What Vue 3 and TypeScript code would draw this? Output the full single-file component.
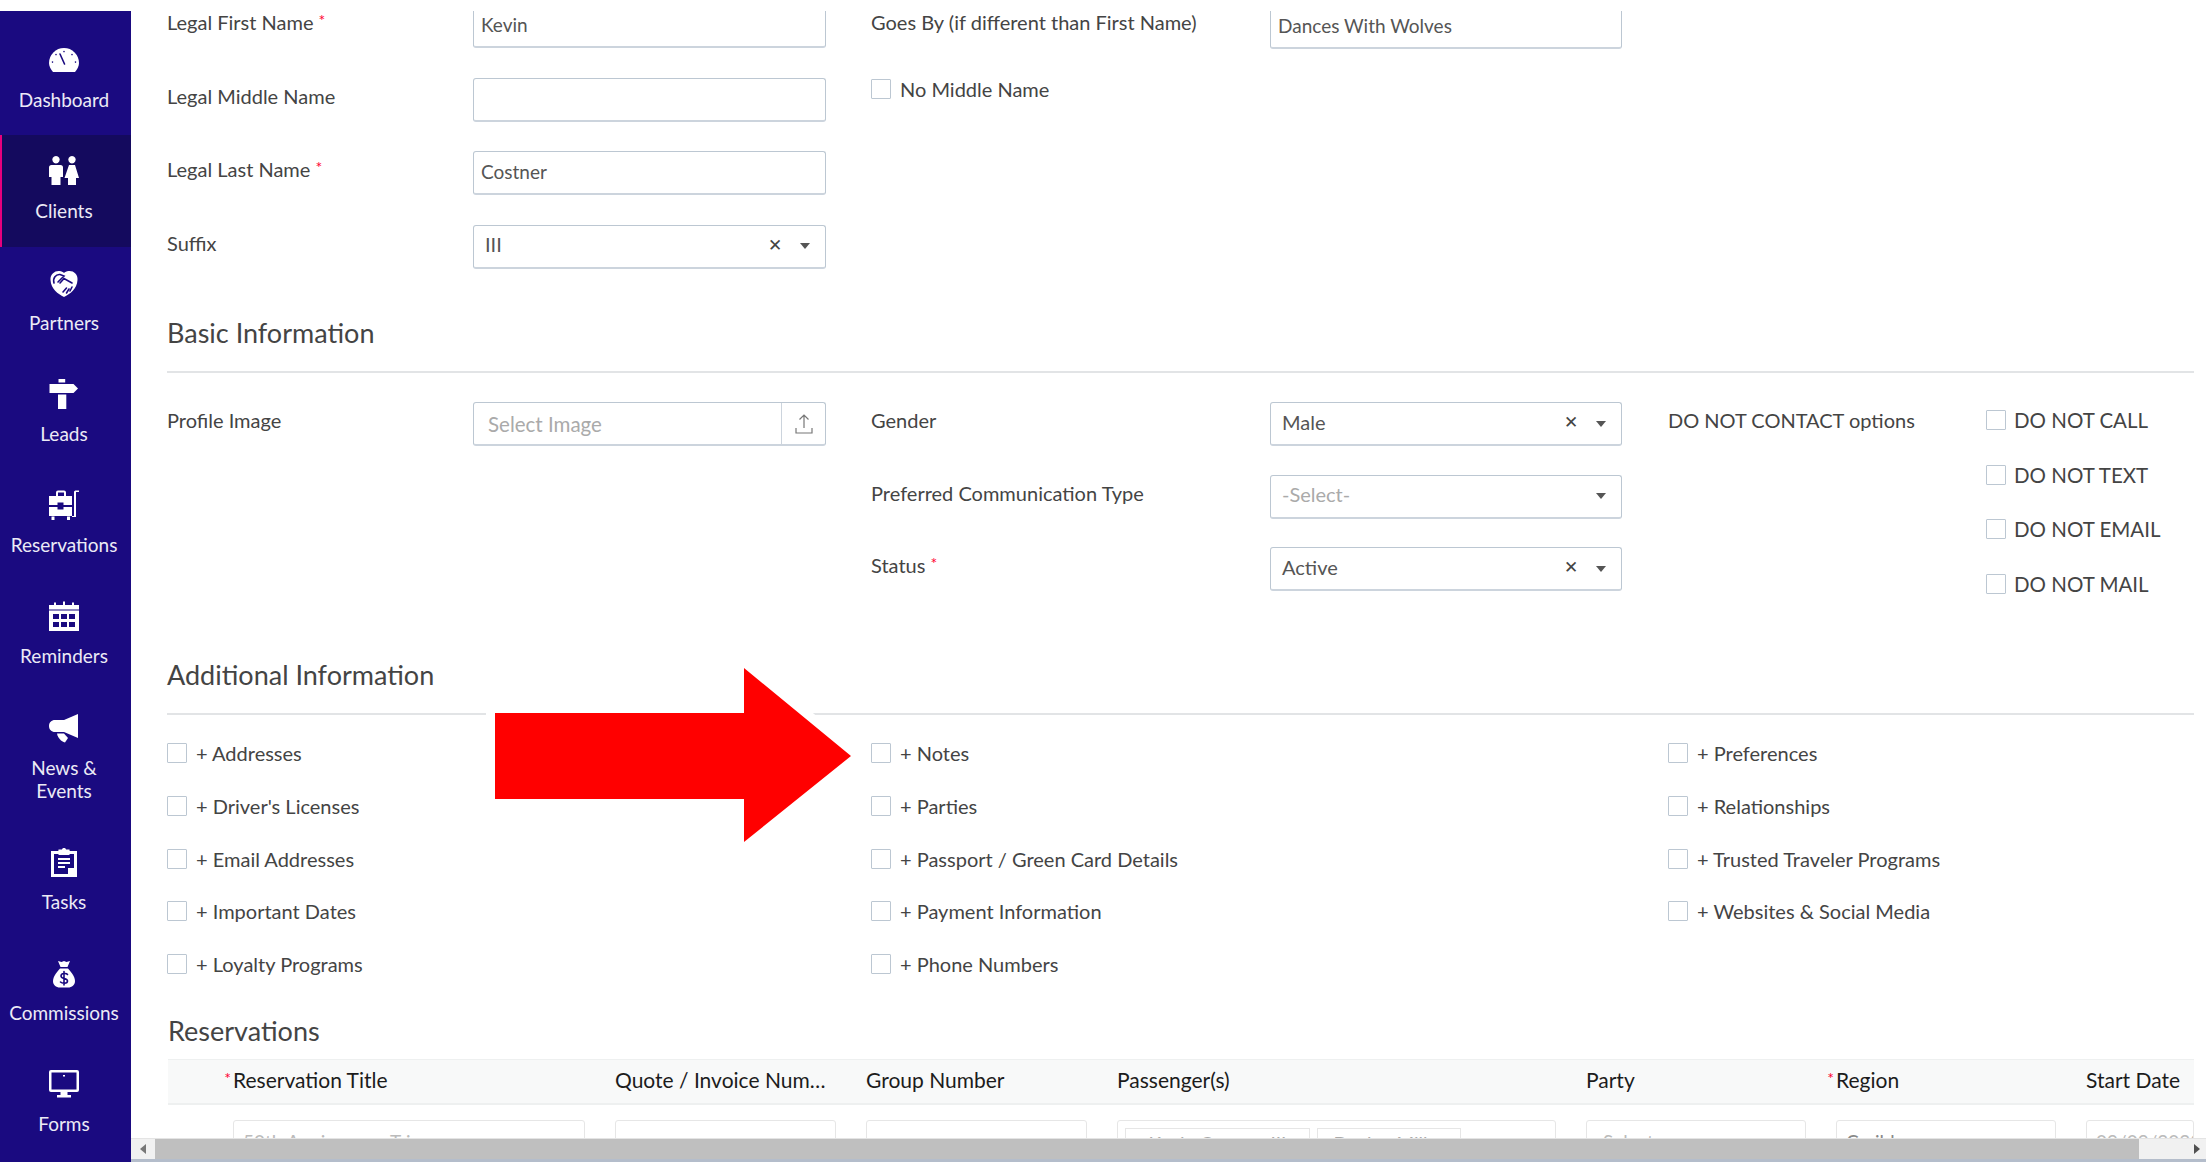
<script setup lang="ts">
interface Shape { d: string; k: 'w' | 'd' | 'ws' | 'ds' }
interface NavItem { label: string; active?: boolean; tall?: boolean; shapes: Shape[] }

const nav: NavItem[] = [
  { label: 'Dashboard', shapes: [
    { k: 'w', d: 'M4 27C1.5 24 0 21 0 18A15 15 0 0 1 30 18C30 21 28.500 24 26 27Z' },
    { k: 'ds', d: 'M11 9L15.500 19' },
    { k: 'ds', d: 'M15 6.500v.1M7 9.500v.1M23 9.500v.1M3.500 17v.1M26.500 17v.1' },
  ] },
  { label: 'Clients', active: true, shapes: [
    { k: 'w', d: 'M7 0a3.700 3.700 0 1 1-.01 0ZM23 0a3.700 3.700 0 1 1-.01 0Z' },
    { k: 'w', d: 'M2.500 9H11.500A2.500 2.500 0 0 1 14 11.500V21H11.500V29H2.500V21H0V11.500A2.500 2.500 0 0 1 2.500 9Z' },
    { k: 'w', d: 'M20 9H26L30 22H27V29H19V22H15.500Z' },
  ] },
  { label: 'Partners', shapes: [
    { k: 'w', d: 'M15 29C9 26 2 21 1.500 12C1 6 6 2.500 10.500 3C12.500 3.200 14 4 15 5C16 4 17.500 3.200 19.500 3C24.500 2.500 29 6 28.500 12C28 21 21 26 15 29Z' },
    { k: 'ds', d: 'M5 15C3.500 10 7 6 11 6.500L15 8L9 14' },
    { k: 'ds', d: 'M11 15L15 10.500L23 15M14 24L17.500 20M17.500 25L20 21M21 23L23 19' },
  ] },
  { label: 'Leads', shapes: [
    { k: 'w', d: 'M9.500 0H16.200V3.500H9.500Z' },
    { k: 'w', d: 'M.5 5H24.500L29 9.500L24.500 14H.5Z' },
    { k: 'w', d: 'M9 15.500H17.300V30H9Z' },
  ] },
  { label: 'Reservations', shapes: [
    { k: 'w', d: 'M0 6H7V2.500A2 2 0 0 1 9 .5H15A2 2 0 0 1 17 2.500V6H23V15H14.500V12.500H8.500V15H0ZM9 6H15V2.500H9Z' },
    { k: 'w', d: 'M0 17H8.500V19.500H14.500V17H23V26H0Z' },
    { k: 'w', d: 'M2.500 26.500H5.500V30H2.500ZM18 26.500H21V30H18ZM25 2C25 1 26 .5 27 .5H30V2H27V27H23V26H25Z' },
  ] },
  { label: 'Reminders', shapes: [
    { k: 'w', d: 'M0 4H5V1.500H7V4H14V.5H16V4H23V1.500H25V4H30V30H0Z' },
    { k: 'd', d: 'M0 8.500H30V9.500H0ZM4 13H10V18H4ZM12 13H18V18H12ZM20 13H26V18H20ZM4 21H10V26H4ZM12 21H18V26H12ZM20 21H26V26H20Z' },
  ] },
  { label: 'News & Events', tall: true, shapes: [
    { k: 'w', d: 'M29 1V25L15 19H6C2.500 19 0 16.500 0 13C0 9.500 2.500 7 6 7H15Z' },
    { k: 'w', d: 'M8 20.500H15L19 25L16 29.500C12 28.500 9 25 8 20.500Z' },
  ] },
  { label: 'Tasks', shapes: [
    { k: 'w', d: 'M2 4H9.500V2.500H13C13 .5 17 .5 17 2.500H20.500V4H28V30H2ZM5 7V27H19V21H25V7Z' },
    { k: 'w', d: 'M9.500 3.500H20.500V8H9.500ZM9 11H21V13H9ZM9 15H21V17H9ZM9 19H16V21H9ZM21 23H25L21 27Z' },
  ] },
  { label: 'Commissions', shapes: [
    { k: 'w', d: 'M9 3L12.500 4L15 3L17.500 4L21 3L18.500 9H11.500Z' },
    { k: 'w', d: 'M11 10.500H19C21 13 26 18 26 23C26 27 23 29.500 19 29.500H11C7 29.500 4 27 4 23C4 18 9 13 11 10.500Z' },
    { k: 'ds', d: 'M18.500 16.500C17.500 15 12 15 12 18C12 21.500 18.500 19.500 18.500 23C18.500 26 13 25.500 11.500 24M15 13.500V27' },
  ] },
  { label: 'Forms', shapes: [
    { k: 'w', d: 'M2 1H28A2 2 0 0 1 30 3V21A2 2 0 0 1 28 23H18.500V26H22V28.500H8V26H11.500V23H2A2 2 0 0 1 0 21V3A2 2 0 0 1 2 1ZM2.500 3.500V20.500H27.500V3.500Z' },
    { k: 'w', d: 'M14 6H16V7.500H14Z' },
  ] },
]

const colA = ['+ Addresses', "+ Driver's Licenses", '+ Email Addresses', '+ Important Dates', '+ Loyalty Programs']
const colB = ['+ Notes', '+ Parties', '+ Passport / Green Card Details', '+ Payment Information', '+ Phone Numbers']
const colC = ['+ Preferences', '+ Relationships', '+ Trusted Traveler Programs', '+ Websites & Social Media']
const dnc = ['DO NOT CALL', 'DO NOT TEXT', 'DO NOT EMAIL', 'DO NOT MAIL']
const heads = [
  { t: 'Reservation Title', req: true },
  { t: 'Quote / Invoice Number' },
  { t: 'Group Number' },
  { t: 'Passenger(s)' },
  { t: 'Party' },
  { t: 'Region', req: true },
  { t: 'Start Date' },
]
</script>

<template>
  <div class="page">
    <div class="shell">
      <nav class="side">
        <a v-for="n in nav" :key="n.label" class="item" :class="{ active: n.active, tall: n.tall }">
          <span class="ic-slot">
            <svg width="30" height="30" viewBox="0 0 30 30" class="ic">
              <path v-for="(s, i) in n.shapes" :key="i" :d="s.d" :class="'k-' + s.k" fill-rule="evenodd" />
            </svg>
          </span>
          <span class="item-label">{{ n.label }}</span>
        </a>
      </nav>

      <div class="main">
        <div class="viewport">
          <div class="content">
            <div class="form-top">
              <label class="lbl">Legal First Name <b class="req">*</b></label>
              <div class="field">Kevin</div>
              <span></span>
              <label class="lbl">Goes By (if different than First Name)</label>
              <div class="field nudge">Dances With Wolves</div>

              <label class="lbl">Legal Middle Name</label>
              <div class="field"></div>
              <span></span>
              <div class="check single"><i class="box"></i>No Middle Name</div>
              <span></span>

              <label class="lbl">Legal Last Name <b class="req">*</b></label>
              <div class="field">Costner</div>
              <span></span><span></span><span></span>

              <label class="lbl">Suffix</label>
              <div class="field select">
                <span class="val">III</span><span class="clear">✕</span><span class="caret"></span>
              </div>
            </div>

            <h2 class="section first">Basic Information</h2>
            <div class="basic">
              <div class="basic-a">
                <label class="lbl">Profile Image</label>
                <div class="field upload">
                  <span class="ph">Select Image</span>
                  <span class="up">
                    <svg width="20" height="22" viewBox="0 0 20 22" fill="none" stroke="#777" stroke-width="1.200">
                      <path d="M10 15V2M5.500 6.500L10 2L14.500 6.500M2 15V20H18V15" />
                    </svg>
                  </span>
                </div>
              </div>
              <div class="basic-b">
                <label class="lbl">Gender</label>
                <div class="field select"><span class="val">Male</span><span class="clear">✕</span><span class="caret"></span></div>
                <label class="lbl">Preferred Communication Type</label>
                <div class="field select"><span class="val muted">-Select-</span><span class="caret"></span></div>
                <label class="lbl">Status <b class="req">*</b></label>
                <div class="field select"><span class="val">Active</span><span class="clear">✕</span><span class="caret"></span></div>
              </div>
              <div class="basic-c">
                <label class="lbl dnc-l">DO NOT CONTACT options</label>
                <div class="dnc">
                  <div v-for="d in dnc" :key="d" class="check caps"><i class="box"></i>{{ d }}</div>
                </div>
              </div>
            </div>

            <h2 class="section second">Additional Information</h2>
            <div class="adds">
              <div class="adds-col a"><div v-for="c in colA" :key="c" class="check"><i class="box"></i>{{ c }}</div></div>
              <div class="adds-col b"><div v-for="c in colB" :key="c" class="check"><i class="box"></i>{{ c }}</div></div>
              <div class="adds-col"><div v-for="c in colC" :key="c" class="check"><i class="box"></i>{{ c }}</div></div>
            </div>

            <h2 class="section third">Reservations</h2>
            <div class="table">
              <div class="thead">
                <div v-for="h in heads" :key="h.t" class="th">
                  <b v-if="h.req" class="req th-req">*</b><span class="th-t">{{ h.t }}</span>
                </div>
              </div>
              <div class="tbody">
                <div class="cell ph-cell">50th Anniversary Trip</div>
                <div class="cell"></div>
                <div class="cell"></div>
                <div class="cell chips">
                  <span class="chip c1">Kevin Costner III</span>
                  <span class="chip c2">Declan Miller</span>
                </div>
                <div class="cell ph-cell">-Select-</div>
                <div class="cell val-cell">Caribbean</div>
                <div class="cell ph-cell">09/09/2023</div>
              </div>
            </div>
          </div>

          <svg class="arrow" width="380" height="200" viewBox="0 0 380 200">
            <path d="M10 55H259V10L366 98L259 184V141H10Z" fill="#ff0000" stroke="#fff" stroke-width="18" stroke-linejoin="round" paint-order="stroke" />
          </svg>
        </div>

        <div class="hscroll">
          <span class="sb-arrow"><i class="tri left"></i></span>
          <span class="thumb"></span>
          <span class="sb-arrow end"><i class="tri right"></i></span>
        </div>
      </div>
    </div>
  </div>
</template>

<style>
html, body { margin: 0; background: #fff; }
</style>

<style scoped>
.page {
  width: 2206px;
  height: 1174px;
  overflow: hidden;
  padding-top: 11px;
  box-sizing: border-box;
  background: #fff;
  font-family: Lato, "Open Sans", sans-serif;
  color: #444;
}
.shell { display: flex; height: 1151px; }

/* sidebar */
.side {
  width: 131px;
  flex: none;
  background: #1a0a80;
  padding-top: 13px;
  box-sizing: border-box;
  overflow: hidden;
  --bg: #1a0a80;
}
.item {
  display: flex;
  flex-direction: column;
  align-items: center;
  height: 111.250px;
  box-sizing: border-box;
  padding: 21px 3px 0 0;
  color: #eceaf6;
  --bg: #1a0a80;
}
.item.tall { height: 134.250px; }
.item.active { background: #140a5e; box-shadow: inset 2px 0 0 #e6007e; --bg: #140a5e; }
.ic-slot { height: 30px; display: block; }
.ic { display: block; }
.k-w { fill: #fff; }
.k-d { fill: var(--bg); }
.k-ds { fill: none; stroke: var(--bg); stroke-width: 1.600; stroke-linecap: round; }
.k-ws { fill: none; stroke: #fff; stroke-width: 1.600; }
.item-label {
  margin-top: 13px;
  font-size: 19px;
  line-height: 23px;
  text-align: center;
  width: 100px;
  white-space: normal;
}
.item:nth-child(5) .item-label,
.item:nth-child(9) .item-label { width: 128px; }

/* main */
.main { flex: 1; min-width: 0; display: flex; flex-direction: column; }
.viewport { position: relative; height: 1127px; overflow: hidden; }
.content { margin-top: -7px; padding: 0 12px 0 36px; }

.lbl { font-size: 20px; line-height: 36px; color: #444; white-space: nowrap; align-self: start; }
.req { font-weight: 400; color: #f03; font-size: 16px; vertical-align: 4px; line-height: 0; }

.field {
  height: 44px;
  box-sizing: border-box;
  border: 1px solid #bcc7d2;
  border-bottom: 2px solid #ccd4dd;
  border-radius: 3px;
  padding: 0 7px 2px;
  display: flex;
  align-items: center;
  font-size: 19px;
  color: #555;
  background: #fff;
}
.nudge { margin-top: 1px; }
.select { padding: 0 12px 4px 11px; font-size: 20px; }
.select .val { flex: 1; }
.muted, .ph { color: #aaa; }
.clear { font-size: 17px; color: #444; margin-right: 15px; width: 17px; }
.caret {
  width: 0; height: 0;
  border-left: 5.500px solid transparent;
  border-right: 5.500px solid transparent;
  border-top: 6px solid #555;
  margin: 4px 3px 0 0;
}
.upload { padding: 0 0 0 14px; font-size: 20.500px; }
.upload .ph { flex: 1; }
.up {
  width: 43px; height: 100%;
  border-left: 1px solid #ccd4dd;
  display: flex; align-items: center; justify-content: center;
}

.form-top {
  display: grid;
  grid-template-columns: 306px 353px 45px 399px 352px;
  grid-auto-rows: 44px;
  row-gap: 29.500px;
}
.check {
  display: flex;
  align-items: center;
  gap: 9px;
  height: 24px;
  font-size: 20px;
  color: #444;
  white-space: nowrap;
}
.check.caps { font-size: 20.500px; gap: 8px; }
.check.single { height: 22px; }
.box {
  width: 20px; height: 20px;
  flex: none;
  box-sizing: border-box;
  border: 1px solid #bcc7d2;
  border-radius: 1px;
  background: #fff;
}

.section {
  margin: 0;
  font-size: 27px;
  font-weight: 400;
  line-height: 36px;
  color: #444;
  padding-bottom: 20px;
  border-bottom: 2px solid #e2e4e6;
}
.section.first { margin-top: 46.500px; margin-bottom: 29px; }
.section.second { margin-top: 61px; margin-bottom: 26px; }
.section.third { margin-top: 37px; padding-bottom: 0; border: 0; margin-bottom: 10px; padding-left: 1px; }

.basic { display: flex; height: 194px; }
.basic-a { width: 704px; display: flex; flex: none; align-items: flex-start; }
.basic-a .lbl { width: 306px; }
.basic-a .field { width: 353px; }
.basic-b {
  flex: none;
  display: grid;
  grid-template-columns: 399px 352px;
  grid-auto-rows: 44px;
  row-gap: 28.500px;
  align-content: start;
}
.basic-c { margin-left: 46px; display: flex; align-items: flex-start; }
.dnc-l { width: 318px; }
.dnc { display: flex; flex-direction: column; gap: 30.600px; margin-top: 6px; }

.adds { display: flex; }
.adds-col { display: flex; flex-direction: column; gap: 28.800px; }
.adds-col.a { width: 704px; flex: none; }
.adds-col.b { width: 797px; flex: none; }

.table { margin-left: 1px; }
.thead, .tbody {
  display: grid;
  grid-template-columns: 352px 221px 221px 439px 220px 220px 1fr;
  column-gap: 30px;
  padding-left: 65px;
}
.thead {
  height: 46px;
  box-sizing: border-box;
  background: #f8f9f9;
  border-top: 1px solid #eef0f0;
  border-bottom: 2px solid #eef0f0;
  align-items: center;
}
.th { position: relative; font-size: 21px; color: #1c1c1c; min-width: 0; padding-bottom: 4px; }
.th-t { display: block; overflow: hidden; white-space: nowrap; text-overflow: ellipsis; }
.th-req { position: absolute; right: 100%; top: 11px; margin-right: 2px; }
.tbody { margin-top: 15px; }
.cell {
  height: 44px;
  box-sizing: border-box;
  border: 1px solid #e6e6e6;
  border-radius: 3px;
  font-size: 19px;
  line-height: 42px;
  overflow: hidden;
  white-space: nowrap;
  padding: 0 9px;
}
.ph-cell { color: #bbb; }
.val-cell { color: #888; }
.chips { display: flex; gap: 7px; padding: 7px; }
.chip {
  height: 30px; border: 1px solid #e6e6e6;
  box-sizing: border-box;
  color: #aaa; font-size: 19px; line-height: 30px;
  text-align: center;
  flex: none;
}
.c1 { width: 185px; }
.c2 { width: 144px; overflow: hidden; }

.arrow { position: absolute; left: 354px; top: 647px; }

.hscroll {
  height: 24px;
  box-sizing: border-box;
  display: flex;
  align-items: stretch;
  background: #f1f1f1;
  border-top: 1px solid #e4e4e4;
  border-bottom: 3px solid #b4bdcb;
}
.sb-arrow { width: 24px; flex: none; display: flex; align-items: center; }
.sb-arrow.end { justify-content: flex-end; padding-right: 6px; box-sizing: border-box; width: 67px; }
.thumb { flex: 1; background: #bfbfbf; }
.tri { width: 0; height: 0; border-top: 5.500px solid transparent; border-bottom: 5.500px solid transparent; }
.tri.left { border-right: 6px solid #777; margin-left: 9px; }
.tri.right { border-left: 6px solid #505050; }
</style>
